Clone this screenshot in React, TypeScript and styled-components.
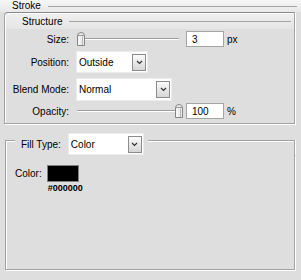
import styled, { createGlobalStyle } from 'styled-components'

const GlobalStyle = createGlobalStyle`
  html, body {
    margin: 0;
    padding: 0;
    background: #dedede;
  }
  body {
    font-family: 'Liberation Sans', Arial, sans-serif;
    font-size: 10px;
    color: #000;
  }
  * {
    box-sizing: border-box;
  }
`

function Chevron() {
  return (
    <svg width='7' height='5' viewBox='0 0 7 5'>
      <polyline points='1,1 3.5,3.5 6,1' fill='none' stroke='#333' strokeWidth='1.2' />
    </svg>
  )
}

function Thumb() {
  return (
    <svg width='8' height='14' viewBox='0 0 8 14'>
      <path
        d='M0.5 13.5 V4 Q0.5 0.5 4 0.5 Q7.5 0.5 7.5 4 V13.5 Z'
        fill='#ececec'
        stroke='#858585'
      />
      <line x1='1' y1='3.5' x2='7' y2='3.5' stroke='#9a9a9a' />
      <line x1='2' y1='4.5' x2='2' y2='13' stroke='#fff' />
      <line x1='5.5' y1='4.5' x2='5.5' y2='13' stroke='#b8b8b8' />
    </svg>
  )
}

function Dropdown({ value, width, height }: { value: string; width: number; height: number }) {
  return (
    <Select $w={width} $h={height}>
      <span>{value}</span>
      <DropButton>
        <Chevron />
      </DropButton>
    </Select>
  )
}

function Slider({ value }: { value: number }) {
  return (
    <SliderBox>
      <Track />
      <ThumbWrap style={{ left: `${(value / 100) * 98}px` }}>
        <Thumb />
      </ThumbWrap>
    </SliderBox>
  )
}

export default function App() {
  return (
    <>
      <GlobalStyle />
      <Panel>
        <TitleBar>
          <span>Stroke</span>
          <Rule />
        </TitleBar>

        <Group>
          <GroupHead>
            <span>Structure</span>
            <Rule />
          </GroupHead>

          <Row $h={16} $mt={2}>
            <Label>Size:</Label>
            <Slider value={0} />
            <NumberField>3</NumberField>
            <Unit>px</Unit>
          </Row>

          <Row $h={22} $mt={4}>
            <Label>Position:</Label>
            <Dropdown value='Outside' width={72} height={22} />
          </Row>

          <Row $h={23} $mt={5}>
            <Label>Blend Mode:</Label>
            <Dropdown value='Normal' width={96} height={23} />
          </Row>

          <Row $h={16} $mt={2}>
            <Label>Opacity:</Label>
            <Slider value={100} />
            <NumberField>100</NumberField>
            <Unit>%</Unit>
          </Row>
        </Group>

        <FillHead>
          <HeadEdge $side='left' />
          <FillLabel>Fill Type:</FillLabel>
          <Dropdown value='Color' width={76} height={22} />
          <HeadEdge $side='right' />
        </FillHead>

        <FillBody>
          <ColorLabel>Color:</ColorLabel>
          <SwatchCol>
            <Swatch $color='#000000' />
            <HexText>#000000</HexText>
          </SwatchCol>
        </FillBody>
      </Panel>
    </>
  )
}

const Panel = styled.div`
  width: 301px;
  height: 280px;
  background: #dedede;
  overflow: hidden;
  display: flex;
  flex-direction: column;
`

const TitleBar = styled.div`
  height: 12px;
  display: flex;
  align-items: center;
  gap: 7px;
  padding: 0 4px 0 12px;
  background: linear-gradient(#f6f6f6, #e8e8e8);
  line-height: 12px;
`

const Rule = styled.div`
  flex: 1;
  height: 1px;
  background: #a4a4a4;
`

const Group = styled.div`
  margin-left: 4px;
  width: 291px;
  height: 112px;
  border: 1px solid #a2a2a2;
  border-top-color: #8a8a8a;
  border-top-left-radius: 4px;
  box-shadow: inset 1px 1px 0 #fff, 1px 1px 0 #fff;
  display: flex;
  flex-direction: column;
`

const GroupHead = styled.div`
  height: 15px;
  margin: 1px 0 0 1px;
  padding: 0 3px 0 16px;
  display: flex;
  align-items: center;
  gap: 6px;
  background: linear-gradient(#efefef, #e5e5e5);
  border-top-left-radius: 3px;
  line-height: 12px;
`

const Row = styled.div<{ $h: number; $mt: number }>`
  display: flex;
  align-items: center;
  height: ${(p) => p.$h}px;
  margin-top: ${(p) => p.$mt}px;
`

const Label = styled.span`
  width: 64px;
  margin-right: 7px;
  text-align: right;
`

const Select = styled.div<{ $w: number; $h: number }>`
  width: ${(p) => p.$w}px;
  height: ${(p) => p.$h}px;
  background: #fff;
  border: 1px solid #ececec;
  display: flex;
  align-items: center;
  justify-content: space-between;
  padding: 0 1px 0 2px;
`

const DropButton = styled.div`
  width: 14px;
  height: 17px;
  border: 1px solid #8c8c8c;
  background: linear-gradient(#fbfbfb, #d6d6d6);
  display: flex;
  align-items: center;
  justify-content: center;
`

const SliderBox = styled.div`
  position: relative;
  width: 106px;
  height: 16px;
  margin-left: 1px;
`

const Track = styled.div`
  position: absolute;
  left: 0;
  right: 4px;
  top: 7px;
  border-top: 1px solid #9c9c9c;
  border-bottom: 1px solid #fff;
`

const ThumbWrap = styled.div`
  position: absolute;
  top: 1px;
  line-height: 0;
`

const NumberField = styled.div`
  width: 38px;
  height: 16px;
  margin-left: 3px;
  padding-left: 5px;
  border: 1px solid #a4a4a4;
  background: #fff;
  display: flex;
  align-items: center;
`

const Unit = styled.span`
  margin-left: 3px;
`

const FillHead = styled.div`
  display: flex;
  align-items: center;
  height: 22px;
  margin: 9px 0 0 5px;
  width: 290px;
`

const HeadEdge = styled.div<{ $side: 'left' | 'right' }>`
  align-self: stretch;
  margin-top: 7px;
  border-top: 1px solid #a2a2a2;
  ${(p) =>
    p.$side === 'left'
      ? `
    width: 10px;
    margin-right: 6px;
    border-left: 1px solid #a2a2a2;
    box-shadow: inset 1px 1px 0 #fff;
  `
      : `
    flex: 1;
    margin-left: 4px;
    border-right: 1px solid #a2a2a2;
    box-shadow: inset 0 1px 0 #fff, 1px 0 0 #fff;
  `}
`

const FillLabel = styled.span`
  margin-right: 7px;
`

const FillBody = styled.div`
  margin-left: 5px;
  width: 290px;
  height: 115px;
  border: 1px solid #a2a2a2;
  border-top: none;
  box-shadow: inset 1px 0 0 #fff, 1px 1px 0 #fff;
  padding: 10px 0 0 9px;
  display: flex;
  align-items: flex-start;
`

const ColorLabel = styled.span`
  margin: 3px 5px 0 0;
`

const SwatchCol = styled.div`
  display: flex;
  flex-direction: column;
`

const Swatch = styled.div<{ $color: string }>`
  width: 32px;
  height: 17px;
  border: 1px solid #808080;
  background: ${(p) => p.$color};
`

const HexText = styled.span`
  margin: 2px 0 0 1px;
  font-size: 9px;
  font-weight: bold;
  line-height: 9px;
`
